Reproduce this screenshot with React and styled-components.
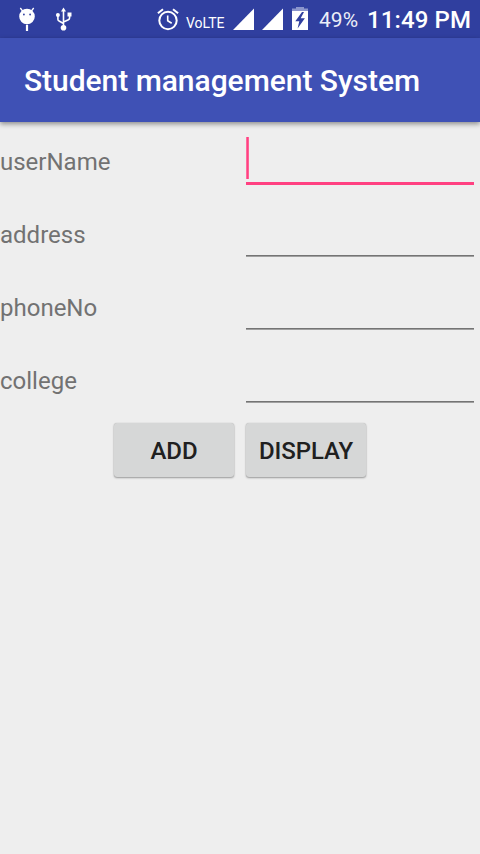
import React from "react";
import styled, { createGlobalStyle } from "styled-components";

const GlobalStyle = createGlobalStyle`
  * { box-sizing: border-box; }
  body { margin: 0; background: #eeeeee; font-family: Roboto, "Noto Sans", sans-serif; }
`;

const Screen = styled.div`
  width: 480px;
  height: 854px;
  display: flex;
  flex-direction: column;
  background: #eeeeee;
  overflow: hidden;
`;

const StatusBar = styled.header`
  height: 38px;
  flex: none;
  display: flex;
  align-items: center;
  justify-content: space-between;
  padding: 0 9px 0 18px;
  background: #303f9f;
  color: #fff;
`;

const StatusGroup = styled.div`
  display: flex;
  align-items: center;
  height: 38px;
`;

const StatusIcon = styled.svg`
  display: block;
  flex: none;
  margin-left: ${(p) => p.$gap || 0}px;
  fill: #fff;
`;

const StatusText = styled.span`
  font-size: ${(p) => p.$size}px;
  font-weight: ${(p) => p.$weight || 400};
  line-height: 24px;
  letter-spacing: ${(p) => p.$spacing || 0}px;
  margin-left: ${(p) => p.$gap}px;
  padding-top: ${(p) => p.$drop || 0}px;
  color: ${(p) => p.$color || "#fff"};
  white-space: nowrap;
`;

const AppBar = styled.div`
  height: 84px;
  flex: none;
  display: flex;
  align-items: center;
  padding: 1px 24px 0;
  background: #3f51b5;
  box-shadow: 0 2px 5px rgba(0, 0, 0, 0.42);
`;

const Title = styled.h1`
  margin: 0;
  font-size: 30px;
  line-height: 36px;
  font-weight: 500;
  letter-spacing: -0.04px;
  color: #fff;
  white-space: nowrap;
`;

const Form = styled.form`
  display: flex;
  flex-direction: column;
`;

const Row = styled.div`
  display: grid;
  grid-template-columns: 240px 240px;
  height: 73px;
`;

const Label = styled.label`
  padding-top: 26px;
  font-size: 24px;
  line-height: 28px;
  color: #727272;
`;

const Field = styled.div`
  display: flex;
  height: ${(p) => (p.$active ? 48 : 46)}px;
  margin: 15px 6px 0;
  border-bottom: ${(p) => (p.$active ? "3px solid #ff4081" : "1px solid #747474")};
  box-shadow: ${(p) => (p.$active ? "none" : "0 1px 0 #a0a0a0")};
`;

const Caret = styled.span`
  width: 3px;
  height: 42px;
  background: linear-gradient(90deg, #ff6b9d 0 1px, #ff4081 1px 2px, #ff6096 2px 3px);
`;

const Actions = styled.div`
  display: flex;
  justify-content: center;
  gap: 12px;
  padding-top: 9px;
`;

const Button = styled.button`
  width: 120px;
  height: 54px;
  padding: 2px 0 0;
  border: 0;
  border-radius: 3px;
  background: #d6d7d7;
  box-shadow: 0 0 1px rgba(0, 0, 0, 0.2), 0 1px 2px rgba(0, 0, 0, 0.35);
  font-family: inherit;
  font-size: 24px;
  line-height: 28px;
  font-weight: 500;
  letter-spacing: -0.1px;
  color: #202020;
`;

const fields = ["userName", "address", "phoneNo", "college"];

function DebugIcon() {
  return (
    <StatusIcon width="18" height="26" viewBox="0 0 18 26">
      <path d="M2.3 2 5 5.5M15.7 2 13 5.5" stroke="#fff" strokeWidth="1.3" fill="none" />
      <path fillRule="evenodd" d="M9 2.7a7.8 7.8 0 1 0 0 15.6a7.8 7.8 0 1 0 0-15.6ZM5.9 7.6a.9.9 0 1 1 0 1.8a.9.9 0 1 1 0-1.8ZM12.1 7.6a.9.9 0 1 1 0 1.8a.9.9 0 1 1 0-1.8Z" />
      <path d="M7.9 18.8h2.2V25H7.9z" />
    </StatusIcon>
  );
}

function UsbIcon() {
  return (
    <StatusIcon $gap={19} width="18" height="24" viewBox="0 0 18 24">
      <path d="M8.5 4v17M2.9 8v4.2q0 1.3 1.2 1.8l4.4 2.5M14.6 8v2.8q0 1.5-1.2 2L8.5 15" stroke="#fff" strokeWidth="1.6" fill="none" />
      <path d="M8.5.5 11 4.5H6zM12.5 5.5h4v4h-4z" />
      <circle cx="2.9" cy="8" r="2" />
      <circle cx="8.5" cy="20.7" r="2.8" />
    </StatusIcon>
  );
}

function AlarmIcon() {
  return (
    <StatusIcon width="22" height="23" viewBox="0 0 22 23">
      <g stroke="#fff" fill="none" strokeWidth="2">
        <circle cx="11" cy="12.5" r="8.7" />
        <path d="M.9 5.3 6 1.2M16 1.2l5.1 4.1" />
        <path d="M10.7 7.5v5.3l4 2.5" strokeWidth="1.6" />
      </g>
    </StatusIcon>
  );
}

function SignalIcon({ gap }) {
  return (
    <StatusIcon $gap={gap} width="21" height="22" viewBox="0 0 21 22">
      <path d="M21 .5V22H0z" />
    </StatusIcon>
  );
}

function BatteryIcon() {
  return (
    <StatusIcon $gap={9} width="16" height="24" viewBox="0 0 16 24">
      <path fill="#8c95cc" d="M4 0h8v1.5h4V4H0V1.5h4z" />
      <path d="M0 4h16v19H0z" />
      <path fill="#303f9f" d="M10 5 3.3 14.2h4L5.6 21.5l7.3-10.2H8.7L12 5z" />
    </StatusIcon>
  );
}

export default function App() {
  return (
    <>
      <GlobalStyle />
      <Screen>
        <StatusBar>
          <StatusGroup>
            <DebugIcon />
            <UsbIcon />
          </StatusGroup>
          <StatusGroup>
            <AlarmIcon />
            <StatusText $size={14} $gap={7} $drop={7}>VoLTE</StatusText>
            <SignalIcon gap={8.5} />
            <SignalIcon gap={8} />
            <BatteryIcon />
            <StatusText $size={21} $gap={11} $drop={2} $color="#eceef8">49%</StatusText>
            <StatusText $size={24} $weight={500} $gap={9} $drop={2} $spacing={0.1}>11:49 PM</StatusText>
          </StatusGroup>
        </StatusBar>
        <AppBar>
          <Title>Student management System</Title>
        </AppBar>
        <Form>
          {fields.map((name, i) => (
            <Row key={name}>
              <Label>{name}</Label>
              <Field $active={i === 0}>{i === 0 && <Caret />}</Field>
            </Row>
          ))}
          <Actions>
            <Button type="button">ADD</Button>
            <Button type="button">DISPLAY</Button>
          </Actions>
        </Form>
      </Screen>
    </>
  );
}
